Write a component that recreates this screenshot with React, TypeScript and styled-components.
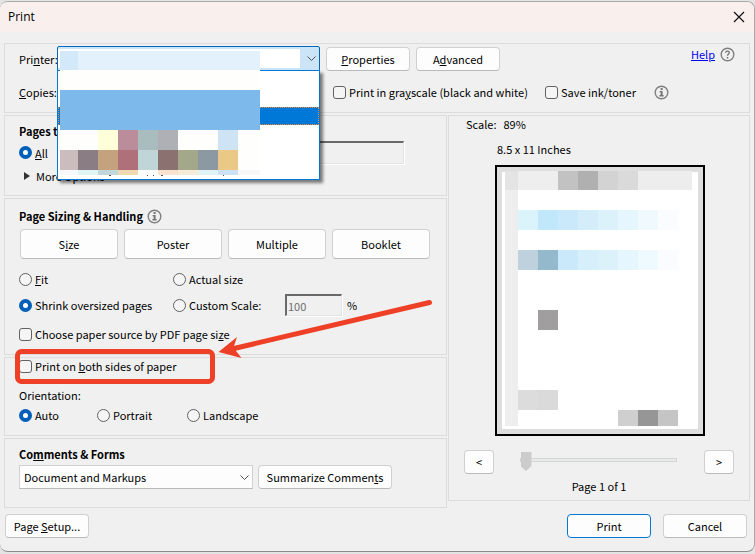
import React from "react";
import styled, { createGlobalStyle, css } from "styled-components";

const Global = createGlobalStyle`
  * { box-sizing: border-box; }
  body { margin: 0; background: #e4e4e4; }
  body, button, input, select {
    font-family: "Noto Sans CJK SC", "Open Sans", sans-serif;
    font-size: 11px;
    line-height: 18px;
    color: #000;
  }
`;

const Dialog = styled.main`
  margin-top: 1px;
  min-height: calc(100vh - 3px);
  background: #f0f0f0;
  border: 1px solid #a9a9a9;
  border-left: 0;
  border-bottom-color: #8c8c8c;
  border-radius: 8px;
  overflow: hidden;
`;

const TitleBar = styled.header`
  display: flex;
  align-items: center;
  justify-content: space-between;
  height: 30px;
  padding: 0 9px 0 8px;
  background: #f9f0ee;
`;

const Title = styled.h1`
  margin: 0;
  font: 400 12px/18px "Open Sans", "Noto Sans", sans-serif;
`;

const CloseButton = styled.button`
  display: flex;
  padding: 0;
  border: 0;
  background: none;
`;

const Body = styled.div`
  display: grid;
  grid-template-columns: minmax(0, 443fr) minmax(0, 302fr);
  column-gap: 1px;
  padding: 11px 4px 0;
`;

const Panel = styled.section`
  border: 1px solid #dcdcdc;
  margin-bottom: 2px;
`;

const PrinterPanel = styled(Panel)`
  grid-column: 1 / -1;
  height: 70px;
  padding: 2px 14px 0;
`;

const PreviewPanel = styled(Panel)`
  align-self: start;
  min-height: 386px;
  padding: 0 15px;
`;

const PagesPanel = styled(Panel)`
  height: 81px;
  padding: 6px 14px 0;
`;

const SizingPanel = styled(Panel)`
  height: 157px;
  padding: 8px 14px 0;
`;

const SidesPanel = styled(Panel)`
  height: 79px;
  padding: 0 14px;
`;

const CommentsPanel = styled(Panel)`
  height: 70px;
  margin-bottom: 0;
  padding: 6px 14px 0;
`;

const Row = styled.div<{ $h: number; $gap?: number }>`
  display: flex;
  align-items: center;
  height: ${(p) => p.$h}px;
  gap: ${(p) => p.$gap ?? 0}px;
`;

const Heading = styled.h2`
  margin: 0;
  font-size: 11px;
  font-weight: 700;
  line-height: 18px;
`;

const FieldLabel = styled.label`
  width: 38px;
  flex: none;
  white-space: nowrap;
`;

const buttonFace = css`
  background: #fdfdfd;
  border: 1px solid #d0d0d0;
  border-bottom-color: #bababa;
  border-radius: 4px;
`;

const Button = styled.button<{ $w: number; $h?: number; $primary?: boolean }>`
  ${buttonFace}
  flex: none;
  width: ${(p) => p.$w}px;
  height: ${(p) => p.$h ?? 24}px;
  padding: 0;
  white-space: nowrap;
  ${(p) => p.$primary && css`border-color: #0078d4;`}
`;

const Check = styled.label`
  display: flex;
  align-items: center;
  gap: 3px;
  white-space: nowrap;
`;

const CheckInput = styled.input`
  appearance: none;
  flex: none;
  width: 13px;
  height: 13px;
  margin: 0;
  background: #f5f5f5;
  border: 1px solid #626262;
  border-radius: 3px;
`;

const RadioInput = styled(CheckInput)`
  border-radius: 50%;
  &:checked {
    border: 4px solid #005fb8;
    background: #fff;
  }
`;

const Combo = styled.div`
  position: relative;
  width: 263px;
  height: 25px;
  flex: none;
`;

const PrinterSelect = styled.select`
  appearance: none;
  display: block;
  width: 100%;
  height: 100%;
  background: #fff;
  border: 1px solid #0067c0;
  border-radius: 2px 2px 0 0;
  box-shadow: inset 0 2px #cce4f7, inset -19px 0 #cce4f7, inset 0 -2px #cce4f7;
  outline: 0;
`;

const ComboArrow = styled.svg`
  position: absolute;
  right: 4px;
  top: 10px;
  pointer-events: none;
`;

const PrinterMenu = styled.ul`
  position: absolute;
  z-index: 2;
  left: 0;
  top: 24px;
  width: 100%;
  height: 110px;
  margin: 0;
  padding: 36px 0 0;
  list-style: none;
  background: #fff;
  border: 1px solid #0078d7;
  box-shadow: 3px 3px 3px rgba(0, 0, 0, 0.5);
`;

const SelectedOption = styled.li`
  height: 18px;
  background: #0078d7;
  border: 1px dotted #ff8728;
`;

const Mosaic = styled.svg`
  position: absolute;
  z-index: 3;
  left: 3px;
  top: 5px;
`;

const Spacer = styled.div`
  flex: 1;
`;

const HelpGroup = styled.div`
  display: flex;
  align-items: center;
  gap: 5px;
  height: 16px;
  align-self: flex-start;
`;

const HelpLink = styled.a`
  color: #0000f0;
`;

const CopiesRow = styled.div`
  display: grid;
  grid-template-columns: 314px 212px 109px auto;
  align-items: center;
  height: 18px;
  margin-top: 12px;
`;

const RangeInput = styled.input`
  width: 100%;
  height: 23px;
  background: #f0f0f0;
  border: 1px solid #e3e3e3;
  border-top: 2px solid #696969;
  box-shadow: 1px 1px #fff;
  padding: 0;
`;

const RangeRow = styled.div`
  display: grid;
  grid-template-columns: 152px minmax(0, 233px);
  align-items: center;
  height: 25px;
`;

const More = styled.button`
  display: flex;
  align-items: center;
  gap: 6px;
  height: 22px;
  padding: 0 0 0 5px;
  border: 0;
  background: none;
`;

const ButtonGrid = styled.div`
  display: grid;
  grid-template-columns: repeat(4, 98px);
  gap: 6px;
  margin: 4px 0 7px 1px;
`;

const OptionGrid = styled.div`
  display: grid;
  grid-template-columns: 154px 112px auto;
  grid-template-rows: 26px 26px;
  align-items: center;
`;

const ScaleBox = styled.div`
  display: flex;
  align-items: center;
  gap: 5px;
`;

const ScaleInput = styled.input`
  width: 57px;
  height: 22px;
  padding: 0 0 0 1px;
  background: #f0f0f0;
  border: 1px solid #e3e3e3;
  border-top: 2px solid #696969;
  border-left: 2px solid #696969;
  box-shadow: 1px 1px #fff;
  color: #6d6d6d;
`;

const Marked = styled.div`
  position: relative;
  height: 16px;
  & > label {
    height: 16px;
  }
`;

const Annotation = styled.svg`
  position: absolute;
  z-index: 4;
  left: -4px;
  top: -60px;
  pointer-events: none;
`;

const OrientationTitle = styled.div`
  margin-top: 12px;
  height: 18px;
`;

const OrientationRow = styled.div`
  display: grid;
  grid-template-columns: 78px 90px auto;
  align-items: center;
  height: 22px;
`;

const MarkupBox = styled.div`
  position: relative;
  width: 234px;
  height: 24px;
`;

const MarkupSelect = styled.select`
  appearance: none;
  width: 100%;
  height: 24px;
  padding: 0 20px 0 4px;
  background: #fdfdfd;
  border: 1px solid #d0d0d0;
  border-bottom-color: #bababa;
`;

const ScaleText = styled.p`
  display: flex;
  gap: 7px;
  margin: 0;
  padding-left: 2px;
  line-height: 16px;
`;

const Preview = styled.figure`
  margin: 9px 0 0;
  padding-left: 31px;
`;

const Caption = styled.figcaption`
  height: 18px;
  padding-left: 2px;
  margin-bottom: 6px;
  line-height: 16px;
`;

const PreviewArt = styled.svg`
  display: block;
`;

const Pager = styled.div`
  display: flex;
  align-items: center;
  justify-content: space-between;
  margin-top: 14px;
`;

const PageSlider = styled.input`
  appearance: none;
  width: 157px;
  height: 20px;
  margin: 0 2px 4px 0;
  background: none;
  &::-webkit-slider-runnable-track {
    height: 4px;
    background: #e9ebeb;
    border: 1px solid #d4d6d6;
  }
  &::-webkit-slider-thumb {
    appearance: none;
    width: 11px;
    height: 19px;
    margin-top: -7px;
    background: #ccc;
    clip-path: polygon(0 0, 100% 0, 100% 74%, 50% 100%, 0 74%);
  }
`;

const PageCount = styled.p`
  margin: 3px 0 0;
  text-align: center;
`;

const Footer = styled.footer`
  display: flex;
  gap: 12px;
  padding: 6px 7px 0 5px;
`;

const Chevron = () => (
  <path d="M0.5 0.5 L4.5 4.5 L8.5 0.5" fill="none" stroke="#555" />
);

function InfoIcon() {
  return (
    <svg width="15" height="15" viewBox="0 0 15 15" aria-label="Information">
      <circle cx="7.5" cy="7.5" r="6.3" fill="none" stroke="#808080" strokeWidth="1.4" />
      <path d="M6.6 3h2v2h-2z M5.6 6h3v4h1v1.4H5.4V10h1.2V7.2h-1z" fill="#757575" />
    </svg>
  );
}

function HelpIcon() {
  return (
    <svg width="15" height="15" viewBox="0 0 15 15" aria-hidden="true">
      <circle cx="7.5" cy="7.5" r="6.3" fill="none" stroke="#808080" strokeWidth="1.4" />
      <path d="M5.6 5.7C5.7 3.6 9.4 3.7 9.3 5.8C9.2 7.1 7.5 7.1 7.5 8.8" fill="none" stroke="#757575" strokeWidth="1.3" />
      <path d="M6.7 10h1.6v1.5H6.7z" fill="#757575" />
    </svg>
  );
}

type Cell = [x: number, y: number, w: number, h: number, fill: string];

const printerCells: Cell[] = [
  [0, 0, 200, 124, "#fefefd"],
  [0, 0, 18, 19, "#d3e8f8"], [18, 0, 182, 19, "#e2f1fb"],
  [0, 39, 200, 40, "#7db9ea"],
  [38, 79, 20, 20, "#feffd9"], [58, 79, 20, 20, "#bb8c99"], [78, 79, 20, 20, "#a9bdbf"],
  [98, 79, 20, 20, "#afb0b6"], [158, 79, 20, 20, "#cee3f3"],
  [0, 99, 18, 20, "#cbbcbe"], [18, 99, 20, 20, "#8b7d84"], [38, 99, 20, 20, "#c5a27e"],
  [58, 99, 20, 20, "#b07079"], [78, 99, 20, 20, "#bfd5d7"], [98, 99, 20, 20, "#8b7271"],
  [118, 99, 20, 20, "#a3a88b"], [138, 99, 20, 20, "#8c99a2"], [158, 99, 20, 20, "#eac885"],
  [0, 119, 18, 5, "#f7f8f9"], [18, 119, 20, 5, "#dff5f6"], [38, 119, 20, 5, "#c0d8dc"],
  [58, 119, 20, 5, "#efd9b2"], [98, 119, 20, 5, "#f9e2d0"], [118, 119, 20, 5, "#f6ebd9"],
  [138, 119, 20, 5, "#e2f3f6"], [158, 119, 20, 5, "#cce1f5"], [178, 119, 22, 5, "#f7f7f8"],
  [49, 124, 2, 1, "#555"], [87, 124, 1, 1, "#555"], [93, 124, 1, 1, "#555"],
  [101, 124, 2, 1, "#555"], [163, 124, 1, 1, "#555"],
];

const pageCells: Cell[] = [
  [10, 6, 13, 255, "#eeeeee"],
  [10, 6, 13, 19, "#e4e4e4"], [23, 6, 40, 19, "#eeeeee"], [63, 6, 20, 19, "#c2c2c2"],
  [83, 6, 20, 19, "#b0b0b0"], [103, 6, 20, 19, "#d3d3d3"], [123, 6, 20, 19, "#dadada"],
  [143, 6, 54, 19, "#ededed"],
  [23, 45, 20, 20, "#dbf3fb"], [43, 45, 20, 20, "#c1e8fa"], [63, 45, 20, 20, "#cae9fb"],
  [83, 45, 20, 20, "#d5edfb"], [103, 45, 20, 20, "#dcf2fb"], [123, 45, 20, 20, "#e5f6fe"],
  [143, 45, 20, 20, "#f0f9fd"], [163, 45, 20, 20, "#fafcff"],
  [23, 85, 20, 20, "#bed1dd"], [43, 85, 20, 20, "#94b8cc"], [63, 85, 20, 20, "#cae9fb"],
  [83, 85, 20, 20, "#d6effb"], [103, 85, 20, 20, "#dcf2fb"], [123, 85, 20, 20, "#e5f6fe"],
  [143, 85, 20, 20, "#effaff"], [163, 85, 20, 20, "#fafcff"],
  [43, 145, 20, 20, "#a09e9f"],
  [23, 225, 20, 20, "#dcdcdc"], [43, 225, 20, 20, "#dadada"],
  [123, 245, 20, 16, "#cfcfcf"], [143, 245, 20, 16, "#969696"], [163, 245, 20, 16, "#c5c5c5"],
];

const Cells = ({ cells }: { cells: Cell[] }) => (
  <g shapeRendering="crispEdges">
    {cells.map(([x, y, width, height, fill]) => (
      <rect key={`${x}-${y}-${width}-${height}`} x={x} y={y} width={width} height={height} fill={fill} />
    ))}
  </g>
);

function PrinterSettings() {
  return (
    <PrinterPanel>
      <Row $h={25} $gap={6}>
        <Row $h={25}>
          <FieldLabel htmlFor="printer">Pri<u>n</u>ter:</FieldLabel>
          <Combo>
            <PrinterSelect id="printer" />
            <ComboArrow width="9" height="6"><Chevron /></ComboArrow>
            <PrinterMenu>
              <SelectedOption />
            </PrinterMenu>
            <Mosaic width="200" height="125"><Cells cells={printerCells} /></Mosaic>
          </Combo>
        </Row>
        <Button $w={84}><u>P</u>roperties</Button>
        <Button $w={84}>A<u>d</u>vanced</Button>
        <Spacer />
        <HelpGroup>
          <HelpLink href="#help">Help</HelpLink>
          <HelpIcon />
        </HelpGroup>
      </Row>
      <CopiesRow>
        <span><u>C</u>opies:</span>
        <Check><CheckInput type="checkbox" /><span>Print in gra<u>y</u>scale (black and white)</span></Check>
        <Check><CheckInput type="checkbox" />Save ink/toner</Check>
        <InfoIcon />
      </CopiesRow>
    </PrinterPanel>
  );
}

function PageRange() {
  return (
    <PagesPanel>
      <Heading>Pages to Print</Heading>
      <RangeRow>
        <Check><RadioInput type="radio" name="range" defaultChecked /><span><u>A</u>ll</span></Check>
        <RangeInput aria-label="Page range" />
      </RangeRow>
      <More>
        <svg width="6" height="8" aria-hidden="true"><path d="M0 0 L6 4 L0 8Z" fill="#333" /></svg>
        More Options
      </More>
    </PagesPanel>
  );
}

function Sizing() {
  return (
    <SizingPanel>
      <Row $h={18} $gap={4}><Heading>Page Sizing &amp; Handling</Heading><InfoIcon /></Row>
      <ButtonGrid>
        <Button $w={98} $h={30}>S<u>i</u>ze</Button>
        <Button $w={98} $h={30}>Poster</Button>
        <Button $w={98} $h={30}>Multiple</Button>
        <Button $w={98} $h={30}>Booklet</Button>
      </ButtonGrid>
      <OptionGrid>
        <Check><RadioInput type="radio" name="size" /><span><u>F</u>it</span></Check>
        <Check><RadioInput type="radio" name="size" />Actual size</Check>
        <span />
        <Check><RadioInput type="radio" name="size" defaultChecked />Shrink oversized pages</Check>
        <Check><RadioInput type="radio" name="size" />Custom Scale:</Check>
        <ScaleBox><ScaleInput aria-label="Custom scale" defaultValue="100" disabled />%</ScaleBox>
      </OptionGrid>
      <Row $h={32}>
        <Check><CheckInput type="checkbox" /><span>Choose paper source by PDF page si<u>z</u>e</span></Check>
      </Row>
    </SizingPanel>
  );
}

function Sides() {
  return (
    <SidesPanel>
      <Marked>
        <Check><CheckInput type="checkbox" /><span>Print on <u>b</u>oth sides of paper</span></Check>
        <Annotation width="420" height="90" viewBox="0 0 420 90" aria-hidden="true">
          <rect x="2.5" y="53.5" width="195" height="30" rx="4" fill="none" stroke="#ee4026" strokeWidth="5" />
          <path d="M414.5 4.5 L219 50.5" stroke="#ee4026" strokeWidth="5" strokeLinecap="round" />
          <path d="M203.5 54 L222 39 L219 48 L221 53 L226.5 60Z" fill="#ee4026" />
        </Annotation>
      </Marked>
      <OrientationTitle>Orientation:</OrientationTitle>
      <OrientationRow>
        <Check><RadioInput type="radio" name="orientation" defaultChecked />Auto</Check>
        <Check><RadioInput type="radio" name="orientation" />Portrait</Check>
        <Check><RadioInput type="radio" name="orientation" />Landscape</Check>
      </OrientationRow>
    </SidesPanel>
  );
}

function Comments() {
  return (
    <CommentsPanel>
      <Heading as="label" htmlFor="markups">Co<u>m</u>ments &amp; Forms</Heading>
      <Row $h={28} $gap={5}>
        <MarkupBox>
          <MarkupSelect id="markups"><option>Document and Markups</option></MarkupSelect>
          <ComboArrow width="9" height="6"><Chevron /></ComboArrow>
        </MarkupBox>
        <Button $w={134}>Summarize Commen<u>t</u>s</Button>
      </Row>
    </CommentsPanel>
  );
}

function PagePreview() {
  return (
    <PreviewPanel>
      <ScaleText><span>Scale:</span><span>89%</span></ScaleText>
      <Preview>
        <Caption>8.5 x 11 Inches</Caption>
        <PreviewArt width="210" height="271" role="img" aria-label="Page preview">
          <rect x="1" y="1" width="208" height="269" fill="#dedede" stroke="#000" strokeWidth="2" />
          <rect x="7" y="7" width="196" height="257" fill="#fff" />
          <Cells cells={pageCells} />
        </PreviewArt>
      </Preview>
      <Pager>
        <Button $w={30}>&lt;</Button>
        <PageSlider type="range" min="1" max="2" defaultValue="1" aria-label="Page" />
        <Button $w={30}>&gt;</Button>
      </Pager>
      <PageCount>Page 1 of 1</PageCount>
    </PreviewPanel>
  );
}

export default function App() {
  return (
    <>
      <Global />
      <Dialog>
        <TitleBar>
          <Title>Print</Title>
          <CloseButton aria-label="Close">
            <svg width="12" height="12"><path d="M1 1 L11 11 M11 1 L1 11" stroke="#111" strokeWidth="1.2" /></svg>
          </CloseButton>
        </TitleBar>
        <Body>
          <PrinterSettings />
          <div>
            <PageRange />
            <Sizing />
            <Sides />
            <Comments />
          </div>
          <PagePreview />
        </Body>
        <Footer>
          <Button $w={84}>Page <u>S</u>etup...</Button>
          <Spacer />
          <Button $w={84} $primary>Print</Button>
          <Button $w={84}>Cancel</Button>
        </Footer>
      </Dialog>
    </>
  );
}
